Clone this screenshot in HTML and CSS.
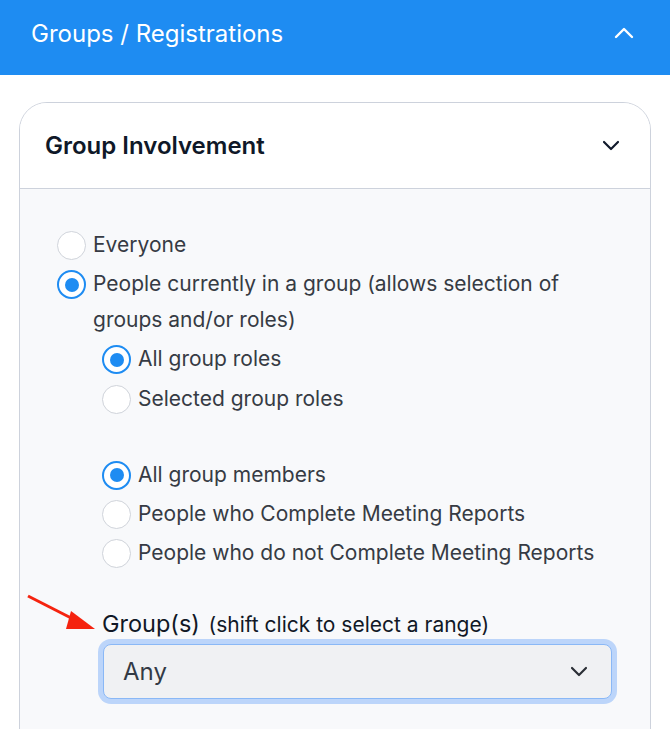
FILE: index.html
```html
<!DOCTYPE html>
<html lang="en">
<head>
  <meta charset="UTF-8" />
  <meta name="viewport" content="width=device-width, initial-scale=1.0"/>
  <title>Groups / Registrations</title>
  <link rel="stylesheet" href="styles.css">
</head>
<body>
  <!-- Section header -->
  <header class="section-header">
    <div class="section-title">Groups / Registrations</div>
    <svg class="section-toggle" width="20" height="12" viewBox="0 0 20 12">
      <path d="M2 10 L10 2 L18 10" fill="none" stroke="#fff" stroke-width="2.4" stroke-linecap="round" stroke-linejoin="round"/>
    </svg>
  </header>

  <div class="wrapper">
    <div class="card">
      <div class="card-header">
        <div class="card-title">Group Involvement</div>
        <svg class="card-toggle" width="18" height="11" viewBox="0 0 18 11">
          <path d="M2 2 L9 9 L16 2" fill="none" stroke="#111a2c" stroke-width="2.2" stroke-linecap="round" stroke-linejoin="round"/>
        </svg>
      </div>

      <div class="card-body">
        <label class="radio-row">
          <input type="radio" name="involvement">
          <span>Everyone</span>
        </label>
        <label class="radio-row">
          <input type="radio" name="involvement" checked>
          <span>People currently in a group (allows selection of groups and/or roles)</span>
        </label>

        <div class="nested">
          <label class="radio-row">
            <input type="radio" name="roles" checked>
            <span>All group roles</span>
          </label>
          <label class="radio-row">
            <input type="radio" name="roles">
            <span>Selected group roles</span>
          </label>

          <div class="spacer"></div>

          <label class="radio-row">
            <input type="radio" name="members" checked>
            <span>All group members</span>
          </label>
          <label class="radio-row">
            <input type="radio" name="members">
            <span>People who Complete Meeting Reports</span>
          </label>
          <label class="radio-row">
            <input type="radio" name="members">
            <span>People who do not Complete Meeting Reports</span>
          </label>

          <div class="field">
            <svg class="pointer-arrow" width="72" height="40" viewBox="0 0 72 40">
              <line x1="3" y1="3" x2="52" y2="28" stroke="#f5230f" stroke-width="3"/>
              <polygon points="46,18 70,36 41,36" fill="#f5230f"/>
            </svg>
            <div class="field-label">Group(s) <small>(shift click to select a range)</small></div>
            <div class="select-box">
              <span>Any</span>
              <svg width="18" height="11" viewBox="0 0 18 11">
                <path d="M2 2 L9 9 L16 2" fill="none" stroke="#2b2f36" stroke-width="2.2" stroke-linecap="round" stroke-linejoin="round"/>
              </svg>
            </div>
          </div>
        </div>
      </div>
    </div>
  </div>
</body>
</html>
```

FILE: styles.css
```css
body {
  margin: 0;
  padding: 0;
  background: #fff;
  font-family: Inter, 'Noto Sans', sans-serif;
  color: #363b44;
}

.section-header {
  height: 75px;
  background-color: #1e8cf2;
  display: flex;
  align-items: center;
  justify-content: space-between;
  padding: 0 36px 0 31px;
  box-sizing: border-box;
}

.section-title {
  color: #fff;
  font-size: 24px;
  margin-top: -8px;
}

.section-toggle {
  margin-top: -10px;
}

.wrapper {
  padding: 27px 19px 0;
}

.card {
  border: 1.5px solid #cdd2dc;
  border-radius: 28px;
  overflow: hidden;
}

.card-header {
  height: 85px;
  background: #fff;
  border-bottom: 1.5px solid #cdd2dc;
  display: flex;
  align-items: center;
  justify-content: space-between;
  padding: 0 30px 0 25px;
}

.card-title {
  font-weight: 600;
  font-size: 24px;
  color: #0f1828;
}

.card-body {
  background: #f8f9fb;
  padding: 38px 40px 60px 37px;
}

.radio-row {
  display: flex;
  align-items: flex-start;
  gap: 7px;
  font-size: 21px;
  line-height: 36px;
  margin-bottom: 3.2px;
}

.radio-row input {
  appearance: none;
  -webkit-appearance: none;
  flex: none;
  width: 29px;
  height: 29px;
  margin: 4px 0 0;
  border: 1.5px solid #cfd3da;
  border-radius: 50%;
  background: #fff;
  box-sizing: border-box;
  display: grid;
  place-items: center;
}

.radio-row input:checked {
  border: 2px solid #1e8cf2;
}

.radio-row input:checked::after {
  content: '';
  width: 14px;
  height: 14px;
  border-radius: 50%;
  background: #1e8cf2;
}

.nested {
  padding-left: 45px;
}

.spacer {
  height: 37px;
}

.field {
  position: relative;
  margin-top: 40px;
}

.pointer-arrow {
  position: absolute;
  left: -77px;
  top: -18px;
}

.field-label {
  font-size: 23.5px;
  color: #111826;
  line-height: 26px;
}

.field-label small {
  font-size: 21px;
  margin-left: 2px;
}

.select-box {
  margin: 6px 0 0 1px;
  width: 509px;
  height: 55px;
  box-sizing: border-box;
  border: 1.5px solid #8ab8f6;
  border-radius: 8px;
  background: #f0f1f3;
  box-shadow: 0 0 0 5px #bcd5fa;
  display: flex;
  align-items: center;
  justify-content: space-between;
  padding: 0 23px 0 19px;
  font-size: 24px;
  color: #333a45;
}
```
